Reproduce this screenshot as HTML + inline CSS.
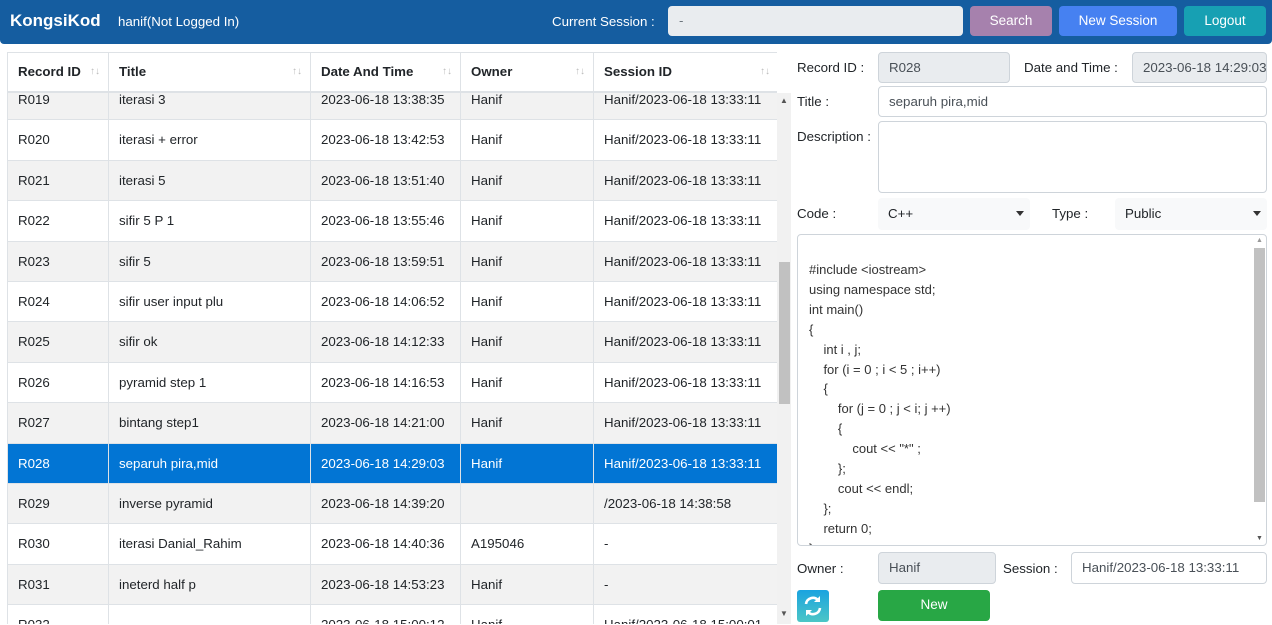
<!DOCTYPE html>
<html><head><style>
*{box-sizing:border-box;margin:0;padding:0}
body{width:1272px;height:624px;overflow:hidden;background:#fff;font-family:"Liberation Sans",sans-serif;font-size:13.3px;color:#212529;position:relative}
.nav{position:absolute;left:0;top:0;width:1272px;height:44px;background:#155da0;border-radius:0 0 4px 4px}
.abs{position:absolute}
.brand{left:10px;top:11px;color:#fff;font-weight:bold;font-size:17px}
.user{left:118px;top:14px;color:#fff;font-size:13.3px}
.btn{position:absolute;color:#fff;border-radius:4px;text-align:center;font-size:13.5px;line-height:30px}
.tbl{position:absolute;left:7px;top:52px;width:770px;height:572px;overflow:hidden;border-left:1px solid #dee2e6}
.row{position:absolute;left:0;width:770px;height:40.4px;border-bottom:1px solid #dee2e6}
.row div{position:absolute;top:0;height:100%;line-height:40px;padding-left:10px;border-right:1px solid #dee2e6;white-space:nowrap}
.c1{left:0;width:101px}.c2{left:101px;width:202px}.c3{left:303px;width:150px}.c4{left:453px;width:133px}.c5{left:586px;width:184px;border-right:none!important}
.g{background:#f2f2f2}
.sel{background:#0275d4;color:#fff}
.hdr{position:absolute;left:0;top:0;width:770px;height:41px;background:#fff;border-top:1px solid #dee2e6;border-bottom:2px solid #dee2e6;font-weight:bold}
.hdr div{line-height:38px}
.ar{position:absolute;right:8px;top:0;color:#bbb;font-size:10px;font-weight:normal}
.lbl{position:absolute;font-size:13.3px}
.inp{position:absolute;border:1px solid #ced4da;border-radius:4px;padding-left:10px;line-height:29px;font-size:13.3px;background:#fff;color:#495057}
.ro{background:#e9ecef}
.sl{position:absolute;background:#f8f9fa;border-radius:4px;padding-left:10px;line-height:32px;color:#212529}
.sl:after{content:"";position:absolute;right:6px;top:13px;border:4px solid transparent;border-top:5px solid #333}
.code{position:absolute;left:797px;top:234px;width:470px;height:312px;border:1px solid #ced4da;border-radius:4px;overflow:hidden;font-size:13px;line-height:19.9px;padding:25px 0 0 11px;color:#333;white-space:pre}
</style></head><body>
<div class="nav"></div>
<div class="abs brand">KongsiKod</div>
<div class="abs user">hanif(Not Logged In)</div>
<div class="abs" style="left:552px;top:14px;color:#fff">Current Session :</div>
<div class="abs" style="left:668px;top:6px;width:295px;height:30px;background:#e9ecef;border-radius:4px;padding-left:11px;line-height:30px;color:#6c757d">-</div>
<div class="btn" style="left:970px;top:6px;width:82px;background:#a681ad">Search</div>
<div class="btn" style="left:1059px;top:6px;width:118px;background:#4681f1">New Session</div>
<div class="btn" style="left:1184px;top:6px;width:82px;background:#17a0b3">Logout</div>

<div class="tbl">
<div class="row g" style="top:28px"><div class="c1">R019</div><div class="c2">iterasi 3</div><div class="c3">2023-06-18 13:38:35</div><div class="c4">Hanif</div><div class="c5">Hanif/2023-06-18 13:33:11</div></div>
<div class="row" style="top:68.4px"><div class="c1">R020</div><div class="c2">iterasi + error</div><div class="c3">2023-06-18 13:42:53</div><div class="c4">Hanif</div><div class="c5">Hanif/2023-06-18 13:33:11</div></div>
<div class="row g" style="top:108.8px"><div class="c1">R021</div><div class="c2">iterasi 5</div><div class="c3">2023-06-18 13:51:40</div><div class="c4">Hanif</div><div class="c5">Hanif/2023-06-18 13:33:11</div></div>
<div class="row" style="top:149.2px"><div class="c1">R022</div><div class="c2">sifir 5 P 1</div><div class="c3">2023-06-18 13:55:46</div><div class="c4">Hanif</div><div class="c5">Hanif/2023-06-18 13:33:11</div></div>
<div class="row g" style="top:189.6px"><div class="c1">R023</div><div class="c2">sifir 5</div><div class="c3">2023-06-18 13:59:51</div><div class="c4">Hanif</div><div class="c5">Hanif/2023-06-18 13:33:11</div></div>
<div class="row" style="top:230px"><div class="c1">R024</div><div class="c2">sifir user input plu</div><div class="c3">2023-06-18 14:06:52</div><div class="c4">Hanif</div><div class="c5">Hanif/2023-06-18 13:33:11</div></div>
<div class="row g" style="top:270.4px"><div class="c1">R025</div><div class="c2">sifir ok</div><div class="c3">2023-06-18 14:12:33</div><div class="c4">Hanif</div><div class="c5">Hanif/2023-06-18 13:33:11</div></div>
<div class="row" style="top:310.8px"><div class="c1">R026</div><div class="c2">pyramid step 1</div><div class="c3">2023-06-18 14:16:53</div><div class="c4">Hanif</div><div class="c5">Hanif/2023-06-18 13:33:11</div></div>
<div class="row g" style="top:351.2px"><div class="c1">R027</div><div class="c2">bintang step1</div><div class="c3">2023-06-18 14:21:00</div><div class="c4">Hanif</div><div class="c5">Hanif/2023-06-18 13:33:11</div></div>
<div class="row sel" style="top:391.6px"><div class="c1">R028</div><div class="c2">separuh pira,mid</div><div class="c3">2023-06-18 14:29:03</div><div class="c4">Hanif</div><div class="c5">Hanif/2023-06-18 13:33:11</div></div>
<div class="row g" style="top:432px"><div class="c1">R029</div><div class="c2">inverse pyramid</div><div class="c3">2023-06-18 14:39:20</div><div class="c4"></div><div class="c5">/2023-06-18 14:38:58</div></div>
<div class="row" style="top:472.4px"><div class="c1">R030</div><div class="c2">iterasi Danial_Rahim</div><div class="c3">2023-06-18 14:40:36</div><div class="c4">A195046</div><div class="c5">-</div></div>
<div class="row g" style="top:512.8px"><div class="c1">R031</div><div class="c2">ineterd half p</div><div class="c3">2023-06-18 14:53:23</div><div class="c4">Hanif</div><div class="c5">-</div></div>
<div class="row" style="top:553.2px"><div class="c1">R032</div><div class="c2"></div><div class="c3">2023-06-18 15:00:12</div><div class="c4">Hanif</div><div class="c5">Hanif/2023-06-18 15:00:01</div></div>
<div class="hdr row"><div class="c1">Record ID<span class="ar">↑↓</span></div><div class="c2">Title<span class="ar">↑↓</span></div><div class="c3">Date And Time<span class="ar">↑↓</span></div><div class="c4">Owner<span class="ar">↑↓</span></div><div class="c5">Session ID<span class="ar">↑↓</span></div></div>
</div>
<div class="abs" style="left:777px;top:93px;width:14px;height:531px;background:#f1f1f1"></div>
<div class="abs" style="left:779px;top:262px;width:11px;height:142px;background:#c1c1c1"></div>
<div class="abs" style="left:780px;top:96px;font-size:8px;color:#555">▲</div>
<div class="abs" style="left:780px;top:609px;font-size:8px;color:#555">▼</div>

<div class="lbl" style="left:797px;top:60px">Record ID :</div>
<div class="inp ro" style="left:878px;top:52px;width:132px;height:31px">R028</div>
<div class="lbl" style="left:1024px;top:60px">Date and Time :</div>
<div class="inp ro" style="left:1132px;top:52px;width:135px;height:31px;overflow:hidden;white-space:nowrap">2023-06-18 14:29:03</div>
<div class="lbl" style="left:797px;top:94px">Title :</div>
<div class="inp" style="left:878px;top:86px;width:389px;height:31px">separuh pira,mid</div>
<div class="lbl" style="left:797px;top:129px">Description :</div>
<div class="inp" style="left:878px;top:121px;width:389px;height:72px"></div>
<div class="lbl" style="left:797px;top:206px">Code :</div>
<div class="sl" style="left:878px;top:198px;width:152px;height:32px">C++</div>
<div class="lbl" style="left:1052px;top:206px">Type :</div>
<div class="sl" style="left:1115px;top:198px;width:152px;height:32px">Public</div>
<div class="code">#include &lt;iostream&gt;
using namespace std;
int main()
{
    int i , j;
    for (i = 0 ; i &lt; 5 ; i++)
    {
        for (j = 0 ; j &lt; i; j ++)
        {
            cout &lt;&lt; "*" ;
        };
        cout &lt;&lt; endl;
    };
    return 0;
}</div>
<div class="abs" style="left:1254px;top:248px;width:11px;height:254px;background:#c1c1c1"></div>
<div class="abs" style="left:1256px;top:237px;font-size:7px;color:#999">▲</div>
<div class="abs" style="left:1256px;top:535px;font-size:7px;color:#555">▼</div>
<div class="lbl" style="left:797px;top:561px">Owner :</div>
<div class="inp ro" style="left:878px;top:552px;width:118px;height:32px;line-height:30px">Hanif</div>
<div class="lbl" style="left:1003px;top:561px">Session :</div>
<div class="inp" style="left:1071px;top:552px;width:196px;height:32px;line-height:30px">Hanif/2023-06-18 13:33:11</div>
<div class="abs" style="left:797px;top:590px;width:32px;height:32px;border-radius:3px;background:linear-gradient(#1aa3e0,#4cc6c6)">
<svg width="32" height="32" viewBox="0 0 32 32"><path d="M9 14a7 7 0 0 1 12-4" stroke="#fff" stroke-width="2.6" fill="none"/><path d="M23 6v6h-6z" fill="#fff"/><path d="M23 18a7 7 0 0 1-12 4" stroke="#fff" stroke-width="2.6" fill="none"/><path d="M9 26v-6h6z" fill="#fff"/></svg></div>
<div class="btn" style="left:878px;top:590px;width:112px;height:31px;background:#28a745">New</div>
</body></html>
